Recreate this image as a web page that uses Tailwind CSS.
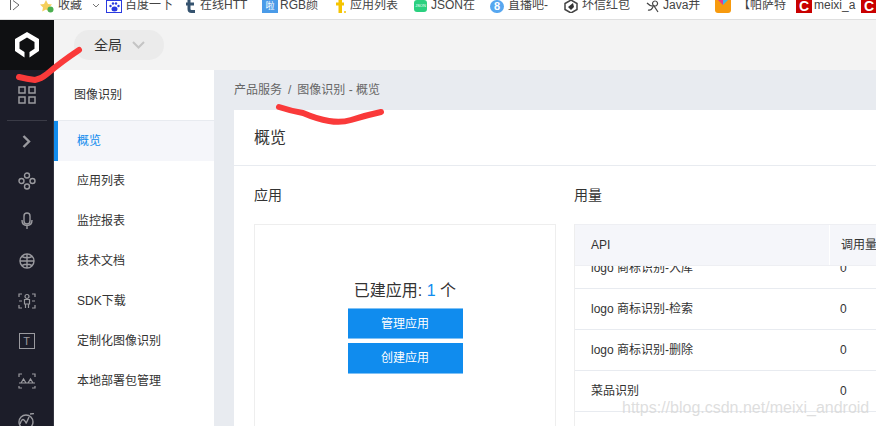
<!DOCTYPE html>
<html lang="zh-CN">
<head>
    <meta charset="UTF-8">
    <meta name="viewport" content="width=device-width, initial-scale=1.0">
    <title>图像识别 - 概览</title>
    <script src="https://cdn.jsdelivr.net/npm/@tailwindcss/browser@4"></script>
</head>
<body class="w-[876px] h-[426px] overflow-hidden relative bg-white text-[#333] font-['Liberation_Sans','Noto_Sans_CJK_SC',sans-serif]">

    <!-- Browser bookmarks bar -->
    <div class="h-5 border-b border-[#dfdfdf] overflow-hidden flex items-start text-[12px] leading-[12px] text-[#444] whitespace-nowrap">
        <svg class="ml-[10px] w-[10px] h-[11px] shrink-0" viewBox="0 0 10 11" fill="none" stroke="#666"><path d="M.5 0v10M3 .5 9 5 3 10"/></svg>
        <svg class="ml-[19px] w-[15px] h-[13px] shrink-0" viewBox="0 0 15 13"><path d="M7 0l2 4 4 .5-3 3 .8 4L7 9.5 3.200 11.500 4 7.500l-3-3L5 4z" fill="#f5cf5b"/><circle cx="11.500" cy="9.500" r="3" fill="#4caf50"/></svg>
        <span class="ml-[4px] w-[30px] shrink-0 mt-[-1px]">收藏</span>
        <svg class="ml-[4px] mt-[3px] w-2 h-[6px] shrink-0" viewBox="0 0 8 6" fill="none" stroke="#777"><path d="M1 1l3 3 3-3"/></svg>
        <div class="ml-[6px] w-4 h-[13px] border border-[#2a3ae0] flex items-center justify-center shrink-0">
            <svg class="w-[11px] h-[10px]" viewBox="0 0 11 10" fill="#2a3ae0"><ellipse cx="5.500" cy="7" rx="3" ry="2.500"/><circle cx="1.500" cy="4" r="1.200"/><circle cx="4" cy="1.500" r="1.200"/><circle cx="7" cy="1.500" r="1.200"/><circle cx="9.500" cy="4" r="1.200"/></svg>
        </div>
        <span class="ml-[3px] w-[49px] shrink-0 mt-[-1px]">百度一下</span>
        <svg class="ml-[11px] w-[11px] h-[13px] shrink-0" viewBox="0 0 11 13" fill="none" stroke="#35536f" stroke-width="3"><path d="M4 0v9q0 2.500 2.500 2.500H10M1 4h8"/></svg>
        <span class="ml-[4px] w-[48px] shrink-0 mt-[-1px]">在线HTT</span>
        <div class="ml-[14px] w-4 h-[13px] bg-[#4a9be8] text-white text-[9px] leading-[13px] text-center shrink-0">啦</div>
        <span class="ml-[2px] w-[37px] shrink-0 mt-[-1px]">RGB颜</span>
        <svg class="ml-[17px] w-3 h-[13px] shrink-0" viewBox="0 0 12 13" fill="#f5c400"><path d="M2 2.500h2.500V0H8v2.500h2v3H8V13H4.500V5.500H2z"/><circle cx="11" cy="12" r="1"/></svg>
        <span class="ml-[4px] w-[49px] shrink-0 mt-[-1px]">应用列表</span>
        <div class="ml-[15px] w-[13px] h-[12px] rounded-[3px] bg-[#2ad07f] text-white text-[4px] leading-[12px] text-center shrink-0">JSON</div>
        <span class="ml-[4px] w-[45px] shrink-0 mt-[-1px]">JSON在</span>
        <div class="ml-[14px] w-[14px] h-[13px] rounded-full bg-[#57a7f0] text-white text-[11px] leading-[12px] text-center font-bold shrink-0">8</div>
        <span class="ml-[4px] w-[42px] shrink-0 mt-[-1px]">直播吧-</span>
        <svg class="ml-[14px] w-[14px] h-[13px] shrink-0" viewBox="0 0 14 13"><path d="M7 0l6 3.500v6L7 13 1 9.500v-6z" fill="none" stroke="#444" stroke-width="1.500"/><path d="M4 7l5-4 1 4-3 3z" fill="#333"/></svg>
        <span class="ml-[4px] w-[49px] shrink-0 mt-[-1px]">坏信红包</span>
        <svg class="ml-[15px] w-[15px] h-[13px] shrink-0" viewBox="0 0 15 13" fill="none" stroke="#444" stroke-width="1.200"><path d="M1 3q4 4 7 3l4 6M9 1a2.500 2.500 0 1 0 .1 0M2 10q3 1 5-3"/></svg>
        <span class="ml-[2px] w-[38px] shrink-0 mt-[-1px]">Java并</span>
        <div class="ml-[14px] w-4 h-[13px] rounded-b-[3px] bg-[#f79a0e] overflow-hidden shrink-0">
            <svg class="w-4 h-[9px]" viewBox="0 0 16 9"><path d="M3 0h5v5z" fill="#e8398a"/><path d="M8 0h5L8 5z" fill="#42b6e8"/></svg>
        </div>
        <span class="ml-[7px] w-[44px] shrink-0 mt-[-1px]">【帕萨特</span>
        <div class="ml-[14px] w-4 h-[13px] bg-[#c90000] text-white text-[14px] leading-[12px] font-bold text-center shrink-0">C</div>
        <span class="ml-[2px] w-[44px] shrink-0 mt-[-1px]">meixi_a</span>
        <div class="ml-[3px] w-4 h-[13px] bg-[#c90000] text-white text-[14px] leading-[12px] font-bold text-center shrink-0">C</div>
    </div>

    <!-- Top header -->
    <div class="h-[50px] bg-[#f3f3f3] flex">
        <div class="w-[54px] bg-[#0f1012] flex items-center justify-center shrink-0">
            <svg class="w-6 h-[26px]" viewBox="0 0 24 26" fill="#fff"><path d="M12 0 24 7v12l-9.500 6.500V20l5-3.200V10L12 5.500 4.500 10v6.800l5 3.200v5.500L0 19V7z"/></svg>
        </div>
        <div class="ml-5 mt-[10px] w-[90px] h-[30px] rounded-[15px] bg-[#ebebeb] flex items-center pl-5 text-[14px]">
            全局
            <svg class="ml-[10px] w-[13px] h-2" viewBox="0 0 13 8" fill="none" stroke="#c4c4c4" stroke-width="2"><path d="M1 1l5.500 5.500L12 1"/></svg>
        </div>
    </div>

    <div class="flex h-[356px]">
        <!-- Dark icon rail -->
        <div class="w-[54px] bg-[#1c1d29] border-r border-[#33343f] shrink-0 flex flex-col items-center overflow-hidden text-[#9a9a9f]">
            <div class="h-[50px] w-full flex items-center justify-center shrink-0">
                <svg class="w-[18px] h-[18px]" viewBox="0 0 18 18" fill="none" stroke="currentColor" stroke-width="1.500"><rect x="1" y="1" width="6" height="6"/><rect x="11" y="1" width="6" height="6"/><rect x="1" y="11" width="6" height="6"/><rect x="11" y="11" width="6" height="6"/></svg>
            </div>
            <div class="w-10 border-t border-[#3a3b46] shrink-0"></div>
            <div class="h-[40px] flex items-center justify-center shrink-0">
                <svg class="w-[9px] h-[13px]" viewBox="0 0 9 13" fill="none" stroke="currentColor" stroke-width="2.400"><path d="M1.500 1 7 6.500 1.500 12"/></svg>
            </div>
            <div class="h-[40px] flex items-center justify-center shrink-0">
                <svg class="w-[18px] h-[18px]" viewBox="0 0 18 18" fill="none" stroke="currentColor" stroke-width="1.400"><circle cx="9" cy="3.500" r="2.500"/><circle cx="9" cy="14.500" r="2.500"/><circle cx="3.500" cy="9" r="2.500"/><circle cx="14.500" cy="9" r="2.500"/></svg>
            </div>
            <div class="h-[40px] flex items-center justify-center shrink-0">
                <svg class="w-[12px] h-[18px]" viewBox="0 0 12 18" fill="none" stroke="currentColor" stroke-width="1.400"><rect x="3" y="1" width="6" height="11" rx="3"/><path d="M1 8q0 5.500 5 5.500T11 8M6 13.500V17"/></svg>
            </div>
            <div class="h-[40px] flex items-center justify-center shrink-0">
                <svg class="w-[16px] h-[16px]" viewBox="0 0 16 16" fill="none" stroke="currentColor" stroke-width="1.400"><circle cx="8" cy="8" r="7"/><path d="M1 8h14M8 1v14M3 3.500q5 2.500 10 0M3 12.500q5-2.500 10 0"/></svg>
            </div>
            <div class="h-[40px] flex items-center justify-center shrink-0">
                <svg class="w-[18px] h-[16px]" viewBox="0 0 18 16" fill="none" stroke="currentColor" stroke-width="1.200"><path d="M1 4V1h3M14 1h3v3M1 12v3h3M14 15h3v-3M1 8h3M14 8h3"/><circle cx="9" cy="3.500" r="2"/><path d="M6.500 6.500h5V11h-5zM7.500 11v4M10.500 11v4"/></svg>
            </div>
            <div class="h-[40px] flex items-center justify-center shrink-0">
                <div class="w-4 h-4 border border-current text-[11px] leading-[14px] text-center">T</div>
            </div>
            <div class="h-[40px] flex items-center justify-center shrink-0">
                <svg class="w-[18px] h-[16px]" viewBox="0 0 18 16" fill="none" stroke="currentColor" stroke-width="1.200"><path d="M1 4V1h3M14 1h3v3M1 13v2h3M14 15h3v-2"/><path d="M1 10h16M3 10l2.500-4L8 10M10 10l2.500-4L15 10"/></svg>
            </div>
            <div class="h-[40px] flex items-center justify-center shrink-0">
                <svg class="w-[17px] h-[17px]" viewBox="0 0 17 17" fill="none" stroke="currentColor" stroke-width="1.400"><circle cx="8" cy="9" r="7"/><path d="M2 11q2-6 4-4t2 3 3-6M12 1l4-.5"/></svg>
            </div>
        </div>

        <!-- Product menu -->
        <div class="w-[160px] bg-white shrink-0 text-[12px]">
            <div class="h-[51px] border-b border-[#e8ebf0] flex items-center pl-5 text-[#333]">图像识别</div>
            <div class="h-10 flex items-center pl-[19px] border-l-4 border-[#108cee] bg-[#f5f6fa] text-[#108cee]">概览</div>
            <div class="h-10 flex items-center pl-[23px]">应用列表</div>
            <div class="h-10 flex items-center pl-[23px]">监控报表</div>
            <div class="h-10 flex items-center pl-[23px]">技术文档</div>
            <div class="h-10 flex items-center pl-[23px]">SDK下载</div>
            <div class="h-10 flex items-center pl-[23px]">定制化图像识别</div>
            <div class="h-10 flex items-center pl-[23px]">本地部署包管理</div>
        </div>

        <!-- Content -->
        <div class="flex-1 bg-[#e8ebf0] pl-5 min-w-0">
            <div class="h-10 flex items-center text-[12px] text-[#666] gap-[6px]">
                <span>产品服务</span><span>/</span><span>图像识别 - 概览</span>
            </div>
            <div class="bg-white h-[316px]">
                <div class="h-[56px] border-b border-[#e8ebf0] flex items-center pl-5 text-[16px] text-[#333]">概览</div>
                <div class="flex pl-5 pt-[19px]">
                    <div class="w-[302px] shrink-0">
                        <div class="text-[14px] leading-[20px] text-[#333]">应用</div>
                        <div class="mt-[19px] h-[220px] border border-[#eeeeee] flex flex-col items-center pt-[56px]">
                            <div class="text-[16px] leading-[20px] text-[#333]">已建应用: <span class="text-[#108cee]">1</span> 个</div>
                            <div class="mt-[7px] w-[115px] h-[31px] bg-[#108cee] border-y border-[#7fc1f5] text-white text-[12px] flex items-center justify-center">管理应用</div>
                            <div class="mt-1 w-[115px] h-[31px] bg-[#108cee] border-b border-[#7fc1f5] text-white text-[12px] flex items-center justify-center">创建应用</div>
                        </div>
                    </div>
                    <div class="ml-[18px] flex-1 min-w-0">
                        <div class="text-[14px] leading-[20px] text-[#333]">用量</div>
                        <div class="mt-[19px] border-l border-[#eeeeee] text-[12px] text-[#333] h-[220px] overflow-hidden">
                            <div class="relative z-10 h-[42px] bg-[#f5f6fa] border-y border-[#eeeff3] flex">
                                <div class="w-[255px] border-r border-white pl-4 flex items-center shrink-0">API</div>
                                <div class="pl-[11px] flex items-center whitespace-nowrap">调用量</div>
                            </div>
                            <div class="flex h-[41px] border-b border-[#e8ebf0] items-center mt-[-18px]">
                                <div class="w-[255px] pl-4 shrink-0">logo 商标识别-入库</div><div class="pl-[10px]">0</div>
                            </div>
                            <div class="flex h-[41px] border-b border-[#e8ebf0] items-center">
                                <div class="w-[255px] pl-4 shrink-0">logo 商标识别-检索</div><div class="pl-[10px]">0</div>
                            </div>
                            <div class="flex h-[41px] border-b border-[#e8ebf0] items-center">
                                <div class="w-[255px] pl-4 shrink-0">logo 商标识别-删除</div><div class="pl-[10px]">0</div>
                            </div>
                            <div class="flex h-[41px] border-b border-[#e8ebf0] items-center">
                                <div class="w-[255px] pl-4 shrink-0">菜品识别</div><div class="pl-[10px]">0</div>
                            </div>
                        </div>
                    </div>
                </div>
            </div>
        </div>
    </div>

    <!-- Red marker scribbles drawn over the screenshot, plus the blog watermark -->
    <svg class="absolute left-0 top-0 w-[876px] h-[426px] pointer-events-none" viewBox="0 0 876 426" fill="none" stroke="#fa3a3a" stroke-width="6" stroke-linecap="round" stroke-linejoin="round">
        <path d="M19 77q8 2 16 3 6-1 12-6 14-12 32-24"/>
        <path d="M279 107q12 4 24 6 14 6 26 8 12 2 22-1 16-5 30-8"/>
    </svg>
    <div class="absolute left-[622px] top-[398px] text-[16px] leading-[20px] text-[#d6d6d6]/80 whitespace-nowrap">https://blog.csdn.net/meixi_android</div>
</body>
</html>
